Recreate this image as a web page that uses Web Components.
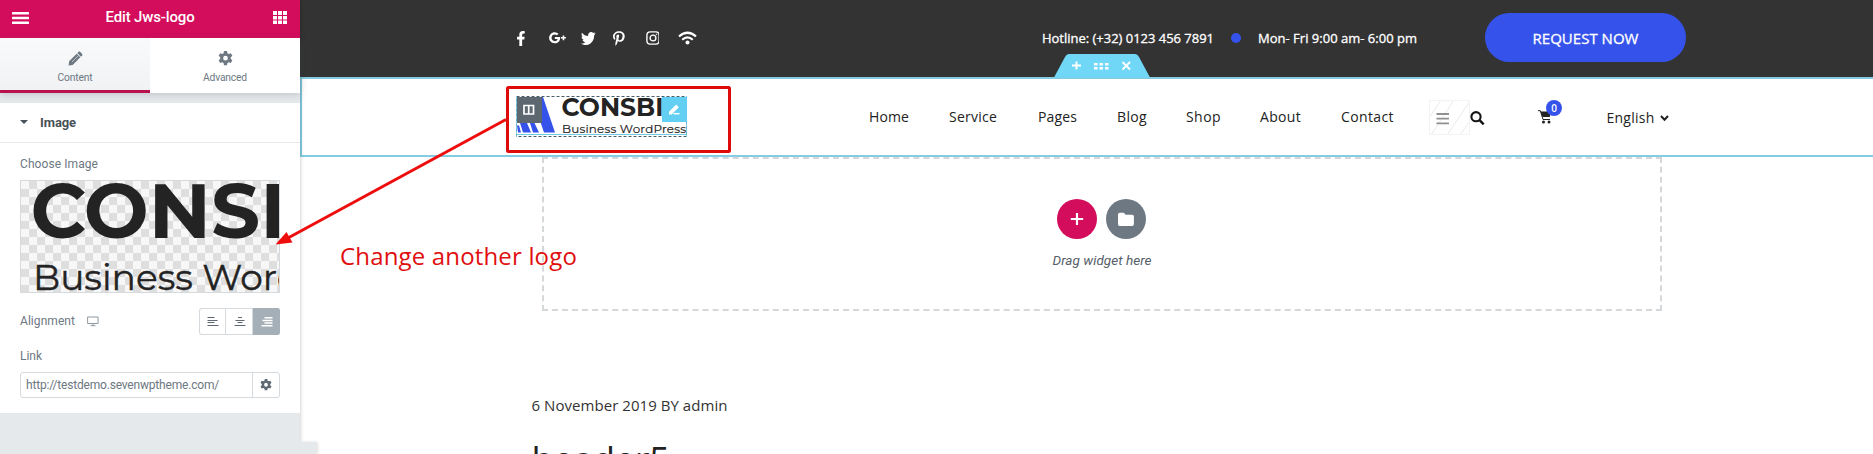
<!DOCTYPE html>
<html lang="en">
<head>
<meta charset="utf-8">
<title>Edit Jws-logo</title>
<style>
html,body{margin:0;padding:0;background:#fff;overflow:hidden}
body{width:1873px;height:454px;position:relative;font-family:"Open Sans",sans-serif}
</style>
</head>
<body>
<editor-app></editor-app>
<script>
const define = (name, html, init) => customElements.define(name, class extends HTMLElement {
  constructor() { super(); this.attachShadow({mode: 'open'}).innerHTML = html; }
  connectedCallback() { if (init) init.call(this, this.shadowRoot); }
});

/* A single line of text that spreads its letters over a given width. */
define('fit-text', `<style>:host{display:inline-block;white-space:nowrap}span{display:inline-block;white-space:nowrap}</style><span><slot></slot></span>`, function (root) {
  const w = parseFloat(this.getAttribute('w'));
  const span = root.querySelector('span');
  this.style.width = w + 'px';
  const n = this.textContent.length;
  span.style.letterSpacing = ((w - span.getBoundingClientRect().width) / n).toFixed(3) + 'px';
});

const GEAR = '<path fill-rule="evenodd" d="M5.6 0h2.8l.4 2 1.3.7 1.9-.7 1.4 2.4-1.5 1.4v1.6l1.5 1.3-1.4 2.4-1.9-.6-1.3.8-.4 1.900H5.600l-.4-1.900-1.300-.8-1.900.600L.6 8.700 2.100 7.400V5.800L.6 4.400 2 2l1.900.7L5.200 2zM7 4.500a2.200 2.200 0 1 0 0 4.400 2.200 2.200 0 0 0 0-4.400z"/>';

define('panel-header', `<style>
:host{display:grid;grid-template-columns:17px 1fr 14px;align-items:start;padding:0 13px 0 12px;height:38px;background:#d30c5c;color:#fff;box-sizing:border-box;fill:#fff}
svg{display:block}.m{margin-top:12px}.g{margin-top:11px}
div{text-align:center;font:500 15px/20px Roboto,sans-serif;padding:7px 2px 0 0}
</style>
<svg class="m" width="17" height="13"><rect width="17" height="2.500" rx=".5"/><rect y="4.800" width="17" height="2.500" rx=".5"/><rect y="9.500" width="17" height="2.500" rx=".5"/></svg>
<div><fit-text w="89">Edit Jws-logo</fit-text></div>
<svg class="g" width="14" height="14"><path d="M0 0h4v4H0zM5 0h4v4H5zM10 0h4v4h-4zM0 5h4v3.500H0zM5 5h4v3.500H5zM10 5h4v3.500h-4zM0 9.500h4v3.500H0zM5 9.500h4v3.500H5zM10 9.500h4v3.500h-4z"/></svg>`);

define('panel-tab', `<style>
:host{display:flex;flex-direction:column;align-items:center;box-sizing:border-box;height:55px;padding-top:13px;background:#fff;color:#6d7882;fill:#6d7882;font:10.300px/14px Roboto,sans-serif}
:host([active]){background:linear-gradient(#f9fafb,#f0f2f4);border-bottom:3px solid #b9104f}
::slotted(svg){display:block;margin-bottom:5px}
</style><slot name="icon"></slot><slot></slot>`);

define('panel-tabs', `<style>:host{display:grid;grid-template-columns:1fr 1fr;box-shadow:0 2px 7px rgba(90,100,110,.25);position:relative}</style>
<panel-tab active><svg slot="icon" width="15" height="15" viewBox="0 0 15 15"><path d="M10.600.8c.5-.5 1-.5 1.500 0l2.100 2.100c.5.500.5 1 0 1.500L12.900 5.700 9.300 2.100zM8.700 2.700l3.600 3.600-7.600 7.600L.6 14.400l.5-4.100z"/><path d="M4 11 10 5" stroke="#f5f6f8" stroke-width=".6"/></svg><fit-text w="35">Content</fit-text></panel-tab>
<panel-tab><svg slot="icon" width="15" height="15" viewBox="0 0 14 14">${GEAR}</svg><fit-text w="44">Advanced</fit-text></panel-tab>`);

define('image-preview', `<style>
:host{display:block;height:113px;box-sizing:border-box;border:1px solid #d5dadf;overflow:hidden;
background:repeating-conic-gradient(#dedede 0 25%,#f7f7f7 0 50%) 0 0/16px 16px}
svg{display:block}
text{fill:#232323;font-family:Montserrat,"Inter",sans-serif}
</style><svg width="258" height="111">
<text x="9.500" y="57" font-size="77" font-weight="700">CONSBI</text>
<text x="12" y="108.500" font-size="36" font-weight="400" stroke="#232323" stroke-width=".4">Business WordPress</text></svg>`);

define('align-buttons', `<style>
:host{display:grid;grid-template-columns:27px 27px 27px;width:81px;height:27px;box-sizing:border-box;border-radius:3px;box-shadow:inset 0 0 0 1px #d5dadf;overflow:hidden;stroke:#5d6872}
span{display:flex;align-items:center;justify-content:center;box-sizing:border-box;border-right:1px solid #d5dadf}
span:last-child{background:#a4afb7;border:0;stroke:#fff}
svg{position:relative;left:.5px}
</style>
<span><svg width="12" height="10"><path d="M.5.500h7M.5 3.500h10M.5 5.500h7M.5 8.500h11" stroke-width="1.200"/></svg></span>
<span><svg width="12" height="10"><path d="M4 .500h4M1.500 3.500h9M3.500 5.500h5M.5 8.500h11" stroke-width="1.200"/></svg></span>
<span><svg width="12" height="10"><path d="M3.500.800h8M1.500 3.500h10M3.500 6h8M.5 8.700h11" stroke-width="1.600"/></svg></span>`);

define('link-field', `<style>
:host{display:grid;grid-template-columns:1fr 27px;height:26px;box-sizing:border-box;border:1px solid #d5dadf;border-radius:3px;font:12px/24px Roboto,sans-serif;color:#6d7882}
.t{padding-left:5px}.g{border-left:1px solid #d5dadf;display:flex;align-items:center;justify-content:center;fill:#5d6872}
</style><div class="t"><fit-text w="193">http://testdemo.sevenwptheme.com/</fit-text></div><div class="g"><svg width="12" height="12" viewBox="0 0 14 14">${GEAR}</svg></div>`);

define('panel-section', `<style>
:host{display:block;background:#fff;height:310px;margin-top:10px;font:12px/16px Roboto,sans-serif;color:#6d7882}
header{height:39px;border-bottom:1px solid #e6e9ec;display:flex;align-items:center;padding-left:20px;gap:13px;color:#495157;font:700 13px/16px Roboto,sans-serif}
main{padding:13px 20px 0}
.l{display:block}.row{display:flex;align-items:center;height:27px;margin-top:15px}.row align-buttons{margin-left:auto}
.row svg{margin:-1px 0 0 12px}
</style>
<header><svg width="8" height="5"><path d="M0 0h8L4 4z" fill="#495157"/></svg><fit-text w="36" style="margin-left:-1px">Image</fit-text></header>
<main><fit-text class="l" w="78">Choose Image</fit-text>
<image-preview style="margin-top:8px"></image-preview>
<div class="row"><fit-text w="55" style="margin-top:-1px">Alignment</fit-text><svg width="12" height="11" fill="none" stroke="#8e99a2"><path d="M.6 1h10.500v6.500H.6zM3.500 9.700h5M6 7.500v2"/></svg><align-buttons></align-buttons></div>
<fit-text class="l" w="22" style="margin-top:13px">Link</fit-text>
<link-field style="margin-top:8px"></link-field></main>`);

define('editor-panel', `<style>:host{display:block;width:300px;height:454px;background:#e6e9ec;box-shadow:0 0 4px rgba(0,0,0,.25);position:relative;z-index:2}
i{position:absolute;left:300px;top:442px;width:16px;height:12px;background:#e6e9ec;box-shadow:2px 0 3px rgba(0,0,0,.12)}</style>
<i></i><panel-header></panel-header><panel-tabs></panel-tabs><panel-section></panel-section>`);

define('social-links', `<style>:host{display:flex;align-items:center;height:16px;fill:#fff}svg{display:block}</style>
<svg width="8" height="15" viewBox="22 0 276 512" preserveAspectRatio="none"><path d="M279 288l14-93h-89v-60c0-25 12-50 52-50h41V7s-37-7-72-7c-73 0-121 44-121 125v70H23v93h81v224h100V288z"/></svg>
<svg style="margin-left:24px" width="18" height="12" viewBox="0 0 18 12"><path d="M6 4.900h5.400c.4 3.800-1.900 6.600-5.500 6.600A5.700 5.700 0 1 1 9.800 1.700L8.100 3.300C6.400 1.700 2.600 2.500 2.600 5.800c0 3.700 5.300 4.800 6.200 1.200H6zM14 3.500h1.600V5h1.700v1.600h-1.700v1.700H14V6.600h-1.700V5H14z"/></svg>
<svg style="margin-left:15px" width="15" height="13" viewBox="0 48 512 416" preserveAspectRatio="none"><path d="M459 152c0 5 0 9 0 14 0 139-106 299-299 299-59 0-115-17-161-47 8 1 16 1 25 1 49 0 94-17 130-45-46-1-85-31-98-73 7 1 13 2 20 2 9 0 19-1 28-4-48-10-84-52-84-103v-1c14 8 30 13 47 13-28-19-47-51-47-87 0-19 5-37 14-53 52 64 130 105 217 110-2-8-3-16-3-24 0-58 47-105 105-105 30 0 57 13 77 33 24-5 46-13 67-25-8 24-24 45-46 58 21-2 42-8 60-16-14 21-32 39-52 53z"/></svg>
<svg style="margin-left:17px" width="12" height="15" viewBox="0 0 384 512" preserveAspectRatio="none"><path d="M204 6C102 6 0 74 0 185c0 70 40 110 64 110 10 0 15-27 15-35 0-9-23-29-23-67 0-80 61-136 139-136 68 0 118 38 118 109 0 53-21 152-90 152-25 0-46-18-46-44 0-38 26-74 26-113 0-66-94-54-94 26 0 17 2 35 10 51-14 59-42 147-42 208 0 19 3 37 4 56 4 4 2 3 7 1 51-69 49-82 72-173 12 24 44 36 69 36 107 0 155-104 155-198C384 71 298 6 204 6z"/></svg>
<svg style="margin-left:21px" width="14" height="14" fill="none" stroke="#fff" stroke-width="1.400"><rect x=".9" y=".9" width="12.200" height="12.200" rx="3.300"/><circle cx="7" cy="7" r="2.900"/><circle cx="10.600" cy="3.400" r=".4" stroke-width=".8"/></svg>
<svg style="margin-left:19px" width="19" height="14" fill="none" stroke="#fff" stroke-width="2.200"><path d="M1 5.500Q9.500-2 18 5.500M4.200 8.700q5.300-4.700 10.600 0"/><circle cx="9.500" cy="11.500" r="2" fill="#fff" stroke="none"/></svg>`);

define('top-bar', `<style>
:host{display:flex;height:77px;background:#333;color:#fff;padding-left:217px;box-sizing:border-box;font:500 13px/18px "Open Sans",sans-serif}
social-links{margin-top:30px;width:180px}.h{margin:29px 0 0 345px}i{width:10px;height:10px;border-radius:50%;background:#3553ea;margin:33px 0 0 17px}.t{margin:29px 0 0 17px}
.h,.t,button{-webkit-text-stroke:.3px #fff}
button{border:0;padding:0;margin:13px 0 0 68px;width:201px;height:49px;border-radius:25px;background:#3553ea;color:#fff;font:500 15px/48px "Open Sans",sans-serif}
</style>
<social-links></social-links><fit-text class="h" w="172">Hotline: (+32) 0123 456 7891</fit-text><i></i><fit-text class="t" w="159">Mon- Fri 9:00 am- 6:00 pm</fit-text><button><fit-text w="106">REQUEST NOW</fit-text></button>`);

define('site-logo', `<style>
:host{display:block;position:relative;width:171px;height:41px}
svg{display:block}text{fill:#232323;font-family:Montserrat,"Inter",sans-serif}
</style>
<svg width="171" height="42">
<path d="M27 1 39 36.500H28L16 1z" fill="#3553ea"/><path d="M14 27h4.500l4.500 9.500h-6zM4 27h7l4 9.500H7zM1 29.500h2l2 7H2z" fill="#3553ea"/>
<text x="45.500" y="20" font-size="25" font-weight="700">CONSBI</text>
<text x="46" y="37" font-size="11.900" font-weight="400" stroke="#232323" stroke-width=".2" textLength="124">Business WordPress</text>
<path d="M0 38.500h171" stroke="#71c8e4"/>
<rect x=".5" y=".5" width="170" height="40" fill="none" stroke="#475f6a" stroke-dasharray="3 2"/>
<path d="M.5 0v41M170.500 0v41" stroke="#71c8e4" stroke-opacity=".8"/>
<path d="M1 1h25v26H1z" fill="#5c6770"/><path d="M146 1h25v25h-25z" fill="#62cff3"/>
<path d="M8 9.500h9.500v8.500H8zM12.700 9v9" fill="none" stroke="#fff" stroke-width="1.700"/>
<path d="m153 15.800 7.200-7.200 2.600 2.600-7.200 7.200H153z" fill="#fff"/><path d="M157.500 17.700h6" stroke="#fff" stroke-width="1.500"/>
</svg>`);

define('nav-menu', `<style>:host{display:flex;font:14px/20px "Open Sans",sans-serif;color:#222}</style>
<fit-text w="40">Home</fit-text><fit-text w="48" style="margin-left:40px">Service</fit-text><fit-text w="39" style="margin-left:41px">Pages</fit-text><fit-text w="30" style="margin-left:40px">Blog</fit-text><fit-text w="35" style="margin-left:39px">Shop</fit-text><fit-text w="41" style="margin-left:39px">About</fit-text><fit-text w="53" style="margin-left:40px">Contact</fit-text>`);

define('nav-tools', `<style>
:host{display:flex;align-items:flex-start;font:14px/20px "Open Sans",sans-serif;color:#222}
svg{display:block}.cart{position:relative;margin-left:54px;padding-top:10px}
b{position:absolute;left:7px;top:0;width:16px;height:16px;border-radius:50%;background:#3553ea;color:#fff;font:600 10px/16px "Open Sans",sans-serif;text-align:center}
</style>
<svg width="41" height="35"><path d="M0 18 12 0M2 35 25 0M18 35 41 1M31 35l10-14" stroke="#e9e9e9"/><rect x=".5" y=".5" width="40" height="34" fill="none" stroke="#f4f4f4"/><path d="M7.500 14h12.500M7.500 18.700h12.500M7.500 23.400h12.500" stroke="#909090" stroke-width="1.800"/></svg>
<svg style="margin-top:11px" width="15" height="14" fill="none" stroke="#151515"><circle cx="6" cy="5.700" r="4.600" stroke-width="2.100"/><path d="m9.500 9.200 4.200 4.100" stroke-width="2.500"/></svg>
<div class="cart" style="left:-1px"><svg width="14" height="14"><path d="M2.500 1.500H13L11.800 7H4.600z" fill="#222"/><path d="M0 .7h2.300L5 9.500h7" fill="none" stroke="#222"/><circle cx="5.500" cy="12" r="1.500" fill="#222"/><circle cx="11" cy="12" r="1.500" fill="#222"/></svg><b style="left:8px">0</b></div>
<fit-text style="margin:8px 0 0 53.500px" w="48">English</fit-text>
<svg style="margin:15px 0 0 5px" width="9" height="7"><path d="m1 1 3.500 3.800L8 1" fill="none" stroke="#222" stroke-width="2"/></svg>`);

define('section-handle', `<style>:host{display:block}svg{display:block}</style>
<svg width="98" height="24"><path d="M1 23.500 12 3Q13.500 0 16 0H82Q84.500 0 86 3L97 23.500z" fill="#71d7f7"/>
<path d="M23.500 7.500v8M19 11.500h9M69.500 8l7.500 7.500M77 8 69.500 15.500" stroke="#fff" stroke-width="1.900"/>
<path d="M41 9h3.500v2.500H41zM46.500 9H50v2.500h-3.500zM52 9h3.500v2.500H52zM41 13h3.500v2.500H41zM46.500 13H50v2.500h-3.500zM52 13h3.500v2.500H52z" fill="#fff"/></svg>`);

define('header-section', `<style>
:host{display:flex;position:relative;height:80px;box-sizing:border-box;border:2px solid #83cce2;border-right:0;background:#fff;align-items:flex-start}
section-handle{position:absolute;left:751px;top:-25px}
site-logo{margin:17px 0 0 214px}nav-menu{margin:28px 0 0 182px}nav-tools{margin:21px 0 0 35px}
</style><section-handle></section-handle><site-logo></site-logo><nav-menu></nav-menu><nav-tools></nav-tools>`);

define('drop-zone', `<style>
:host{display:flex;flex-direction:column;align-items:center;box-sizing:border-box;width:1120px;height:154px;margin-left:242px;border:2px dashed #d5d8db;padding-top:40px;font:italic 13.500px/18px Roboto,sans-serif;color:#556068}
div{display:flex;gap:9px;margin:0 2px 12px 0}svg{display:block}
</style><div><svg width="40" height="40"><circle cx="20" cy="20" r="20" fill="#d30c5c"/><path d="M20 14v12M13.800 20h12.400" stroke="#fff" stroke-width="2.200"/></svg>
<svg width="40" height="40"><circle cx="20" cy="20" r="20" fill="#6d7882"/><path d="M12 15.500q0-1.700 1.700-1.700h4l2 2h6.500q1.700 0 1.700 1.700v7.800q0 1.700-1.700 1.700H13.700q-1.700 0-1.700-1.700z" fill="#fff"/></svg></div>
<fit-text w="99">Drag widget here</fit-text>`);

define('post-intro', `<style>
:host{display:block;padding:84px 0 0 231.500px;color:#333;font:15px/20px "Open Sans",sans-serif}
h1{margin:21px 0 0 0;font:400 36px/48px "Open Sans",sans-serif;color:#222}
fit-text{display:block}
</style><fit-text w="196">6 November 2019 BY admin</fit-text><h1><fit-text w="138">header5</fit-text></h1>`);

define('site-canvas', `<style>:host{display:block;flex:1;min-width:0;height:454px;overflow:hidden}</style>
<top-bar></top-bar><header-section></header-section><drop-zone></drop-zone><post-intro></post-intro>`);

define('callout-note', `<style>
:host{position:absolute;inset:0;z-index:3;color:#e00f0f}
svg{position:absolute;left:0;top:0}
p{position:absolute;left:340px;top:240px;margin:0;font:24px/32px "Open Sans",sans-serif}
</style><svg width="1873" height="454" fill="none" stroke="#de0b0b"><rect x="507.500" y="87.500" width="222" height="64" rx="1" stroke-width="3"/><path d="M506 119.500 288 238" stroke-width="3" stroke="#ee0d0d"/><path d="m275.500 244.500 11-12.500 6 10.500z" fill="#ee0d0d" stroke="none"/></svg><p><fit-text w="237">Change another logo</fit-text></p>`);

define('editor-app', `<style>:host{display:flex;position:relative;width:1873px;height:454px;overflow:hidden}</style>
<editor-panel></editor-panel><site-canvas></site-canvas><callout-note></callout-note>`);
</script>
</body>
</html>
